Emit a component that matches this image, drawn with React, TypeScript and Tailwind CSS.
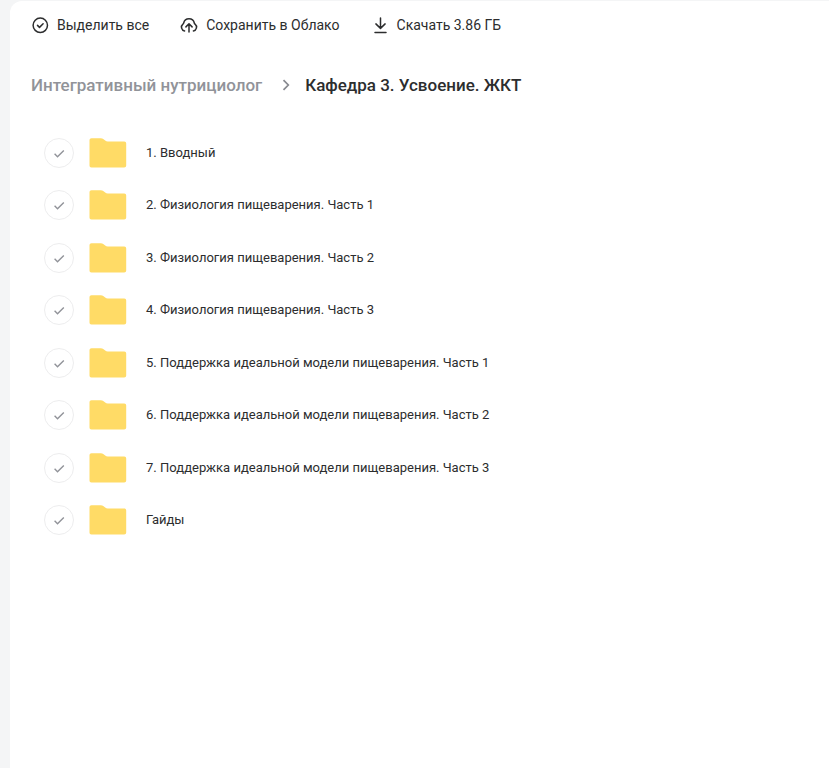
import React from 'react';

const folders = [
  '1. Вводный',
  '2. Физиология пищеварения. Часть 1',
  '3. Физиология пищеварения. Часть 2',
  '4. Физиология пищеварения. Часть 3',
  '5. Поддержка идеальной модели пищеварения. Часть 1',
  '6. Поддержка идеальной модели пищеварения. Часть 2',
  '7. Поддержка идеальной модели пищеварения. Часть 3',
  'Гайды',
];

type IconProps = { children: React.ReactNode };

const ToolbarIcon = ({ children }: IconProps) => (
  <svg
    viewBox="0 0 20 20"
    className="w-5 h-5 shrink-0"
    fill="none"
    stroke="currentColor"
    strokeWidth="1.5"
    strokeLinecap="round"
    strokeLinejoin="round"
    aria-hidden="true"
  >
    {children}
  </svg>
);

const FolderIcon = () => (
  <svg viewBox="0 0 38 30" className="w-[38px] h-[30px] shrink-0" aria-hidden="true">
    <path
      d="M2.5.2H11.6c1.2 0 2.2.3 3 1l1.6 1.3c.8.6 1.5.9 2.6.9H35.2c1.3 0 2 .8 2 2V27.6c0 1.2-.8 2-2 2H2.5c-1.3 0-2-.8-2-2V2.2c0-1.2.8-2 2-2Z"
      fill="#ffdb66"
    />
  </svg>
);

const Toolbar = () => {
  return (
    <div className="flex flex-wrap items-center gap-x-[30px] text-[14px] leading-5">
      <button type="button" className="flex items-center gap-[7px]">
        <ToolbarIcon>
          <circle cx="10.3" cy="10.3" r="7.2" />
          <path d="m7.5 10.4 2 2 3.6-3.6" />
        </ToolbarIcon>
        Выделить все
      </button>
      <button type="button" className="flex items-center gap-[7px]">
        <ToolbarIcon>
          <path d="M5.6 15.9A3.8 3.8 0 0 1 3.9 9.2a1.6 1.6 0 0 0 .8-1.2 5.4 5.4 0 0 1 10.6 0c.1.5.4.9.8 1.2a3.8 3.8 0 0 1-1.7 6.7" />
          <path d="M10 17V9M6.9 11.9 10 8.8l3.1 3.1" />
        </ToolbarIcon>
        Сохранить в Облако
      </button>
      <button type="button" className="flex items-center gap-[7px]">
        <ToolbarIcon>
          <path d="M10.5 3v10.2M5.9 8.9l4.6 4.5 4.6-4.5M5 17.5h11" />
        </ToolbarIcon>
        Скачать 3.86 ГБ
      </button>
    </div>
  );
};

const FolderRow = ({ name }: { name: string }) => {
  return (
    <li className="flex items-center odd:h-[53px] even:h-[52px]">
      <label className="flex items-center">
        <span className="grid place-items-center">
          <input
            type="checkbox"
            className="col-start-1 row-start-1 appearance-none w-[30px] h-[30px] rounded-full border border-[#ededee]"
          />
          <svg
            viewBox="0 0 12 12"
            className="col-start-1 row-start-1 w-3 h-3 pointer-events-none"
            fill="none"
            stroke="#919399"
            strokeWidth="1.4"
            aria-hidden="true"
          >
            <path d="m1.6 6.8 2.9 2.9 6.3-6.3" />
          </svg>
        </span>
        <span className="ml-[15px]">
          <FolderIcon />
        </span>
        <span className="ml-[19px] text-[13px] leading-5">{name}</span>
      </label>
    </li>
  );
};

const App = () => {
  return (
    <div className="min-h-screen flex bg-[#f4f5f6] pt-px pl-[10px] text-[#2c2d2e] font-['Roboto','Liberation_Sans',sans-serif]">
      <main className="grow bg-white rounded-tl-xl pt-[14px] px-5">
        <Toolbar />
        <nav
          aria-label="Путь"
          className="flex items-center mt-[38px] ml-px text-[17px] leading-6 font-medium"
        >
          <a href="#" className="text-[#919399]">
            Интегративный нутрициолог
          </a>
          <svg
            viewBox="0 0 16 16"
            className="w-4 h-4 ml-4 mr-[11px]"
            fill="none"
            stroke="#87898f"
            strokeWidth="1.7"
            aria-hidden="true"
          >
            <path d="m5.5 3.2 4.8 4.8-4.8 4.8" />
          </svg>
          <h1>Кафедра 3. Усвоение. ЖКТ</h1>
        </nav>
        <ul className="mt-[29px] ml-[14px]">
          {folders.map((name) => (
            <FolderRow key={name} name={name} />
          ))}
        </ul>
      </main>
    </div>
  );
};

export default App;
